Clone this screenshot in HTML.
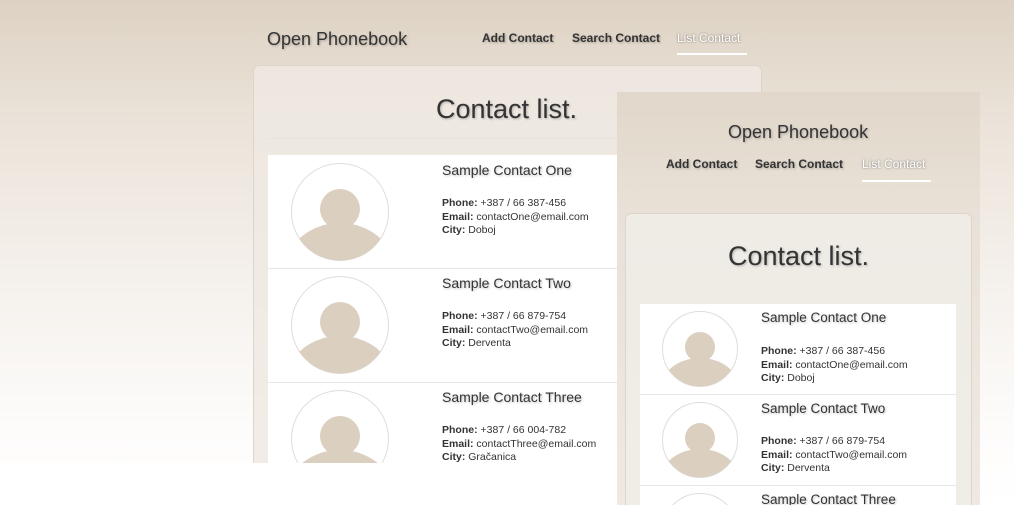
<!DOCTYPE html>
<html><head><meta charset="utf-8"><style>
*{margin:0;padding:0;box-sizing:border-box}
html,body{width:1014px;height:524px;overflow:hidden}
body{position:relative;font-family:"Liberation Sans",sans-serif;color:#333;background:#fff}
.bg{position:absolute;left:0;top:0;width:1014px;height:505px;background:linear-gradient(#ddd2c3 0px,#ebe3d9 120px,#f6f2ee 300px,#fdfcfb 430px,#fff 505px)}
.abs{position:absolute;white-space:nowrap}
.sh{text-shadow:1px 1px 2px rgba(0,0,0,.25)}
.brand{font-size:18px;color:#333}
.nav{font-size:12px;font-weight:bold;color:#333}
.act{color:#fff;font-weight:normal;text-shadow:0 0 2px rgba(0,0,0,.5)}
.card{position:absolute;background:rgba(238,233,227,.85);border:1px solid #ddd5cb;border-radius:6px}
.title{font-size:27px;color:#333}
.list{position:absolute;background:#fff;overflow:hidden}
.row{position:absolute;left:0;right:0;border-top:1px solid #e6e6e6}
.name{position:absolute;font-size:14px;color:#333}
.det{position:absolute;font-size:10.5px;line-height:13.5px;color:#333}
.det b{font-weight:bold}
</style></head><body>
<div class="bg"></div>
<div class="abs brand sh" style="left:267px;top:29px">Open Phonebook</div>
<div class="abs nav sh" style="left:482px;top:31px">Add Contact</div>
<div class="abs nav sh" style="left:572px;top:31px">Search Contact</div>
<div class="abs nav act" style="left:677px;top:31px">List Contact</div>
<div class="abs" style="left:677px;top:53px;width:70px;height:2px;background:#fff"></div>
<div class="card" style="left:253px;top:65px;width:509px;height:410px"></div>
<div class="abs title sh" style="left:436px;top:94px">Contact list.</div>
<div class="abs" style="left:268px;top:138px;width:480px;height:1px;background:#e8e2da"></div>
<div class="list" style="left:268px;top:155px;width:360px;height:308px">
 <div class="row" style="top:0;height:113px;border:0"></div>
 <div class="row" style="top:113px;height:114px"></div>
 <div class="row" style="top:227px;height:114px"></div>
</div>
<svg class="abs" style="left:291px;top:163px" width="98" height="300" viewBox="0 0 98 300">
<defs><clipPath id="c1"><circle cx="49" cy="49" r="48.5"/></clipPath></defs>
<g><circle cx="49" cy="49" r="48.5" fill="#fff" stroke="#ddd"/><g clip-path="url(#c1)"><circle cx="49" cy="46" r="20" fill="#dbcfc0"/><ellipse cx="49" cy="102" rx="52" ry="42" fill="#dbcfc0"/></g></g>
<g transform="translate(0,113)"><circle cx="49" cy="49" r="48.5" fill="#fff" stroke="#ddd"/><g clip-path="url(#c1)"><circle cx="49" cy="46" r="20" fill="#dbcfc0"/><ellipse cx="49" cy="102" rx="52" ry="42" fill="#dbcfc0"/></g></g>
<g transform="translate(0,227)"><circle cx="49" cy="49" r="48.5" fill="#fff" stroke="#ddd"/><g clip-path="url(#c1)"><circle cx="49" cy="46" r="20" fill="#dbcfc0"/><ellipse cx="49" cy="102" rx="52" ry="42" fill="#dbcfc0"/></g></g>
</svg>
<div class="name sh" style="left:442px;top:162px">Sample Contact One</div>
<div class="det" style="left:442px;top:197px"><b>Phone:</b> +387 / 66 387-456<br><b>Email:</b> contactOne@email.com<br><b>City:</b> Doboj</div>
<div class="name sh" style="left:442px;top:275px">Sample Contact Two</div>
<div class="det" style="left:442px;top:310px"><b>Phone:</b> +387 / 66 879-754<br><b>Email:</b> contactTwo@email.com<br><b>City:</b> Derventa</div>
<div class="name sh" style="left:442px;top:389px">Sample Contact Three</div>
<div class="det" style="left:442px;top:424px"><b>Phone:</b> +387 / 66 004-782<br><b>Email:</b> contactThree@email.com<br><b>City:</b> Gračanica</div>
<div class="abs" style="left:0;top:463px;width:624px;height:61px;background:#fff"></div>
<div class="abs" style="left:617px;top:92px;width:363px;height:413px;background:linear-gradient(#e1d7ca,#e9e1d7 120px,#efe9e2 413px)"></div>
<div class="abs brand sh" style="left:728px;top:122px">Open Phonebook</div>
<div class="abs nav sh" style="left:666px;top:157px">Add Contact</div>
<div class="abs nav sh" style="left:755px;top:157px">Search Contact</div>
<div class="abs nav act" style="left:862px;top:157px">List Contact</div>
<div class="abs" style="left:862px;top:180px;width:69px;height:2px;background:#fff"></div>
<div class="card" style="left:625px;top:213px;width:347px;height:310px;background:rgba(240,236,231,.9)"></div>
<div class="abs title sh" style="left:728px;top:241px">Contact list.</div>
<div class="list" style="left:640px;top:304px;width:316px;height:201px">
 <div class="row" style="top:0;height:90px;border:0"></div>
 <div class="row" style="top:90px;height:91px"></div>
 <div class="row" style="top:181px;height:30px"></div>
</div>
<svg class="abs" style="left:662px;top:311px" width="76" height="194" viewBox="0 0 76 194">
<defs><clipPath id="c2"><circle cx="38" cy="38" r="37.5"/></clipPath></defs>
<g><circle cx="38" cy="38" r="37.5" fill="#fff" stroke="#ddd"/><g clip-path="url(#c2)"><circle cx="38" cy="36" r="15" fill="#dbcfc0"/><ellipse cx="38" cy="79" rx="40" ry="32" fill="#dbcfc0"/></g></g>
<g transform="translate(0,91)"><circle cx="38" cy="38" r="37.5" fill="#fff" stroke="#ddd"/><g clip-path="url(#c2)"><circle cx="38" cy="36" r="15" fill="#dbcfc0"/><ellipse cx="38" cy="79" rx="40" ry="32" fill="#dbcfc0"/></g></g>
<g transform="translate(0,182)"><circle cx="38" cy="38" r="37.5" fill="#fff" stroke="#ddd"/></g>
</svg>
<div class="name sh" style="left:761px;top:310px;font-size:13.5px">Sample Contact One</div>
<div class="det" style="left:761px;top:345px"><b>Phone:</b> +387 / 66 387-456<br><b>Email:</b> contactOne@email.com<br><b>City:</b> Doboj</div>
<div class="name sh" style="left:761px;top:401px;font-size:13.5px">Sample Contact Two</div>
<div class="det" style="left:761px;top:435px"><b>Phone:</b> +387 / 66 879-754<br><b>Email:</b> contactTwo@email.com<br><b>City:</b> Derventa</div>
<div class="name sh" style="left:761px;top:492px;font-size:13.5px">Sample Contact Three</div>
<div class="abs" style="left:0;top:505px;width:1014px;height:19px;background:#fff"></div>
</body></html>
